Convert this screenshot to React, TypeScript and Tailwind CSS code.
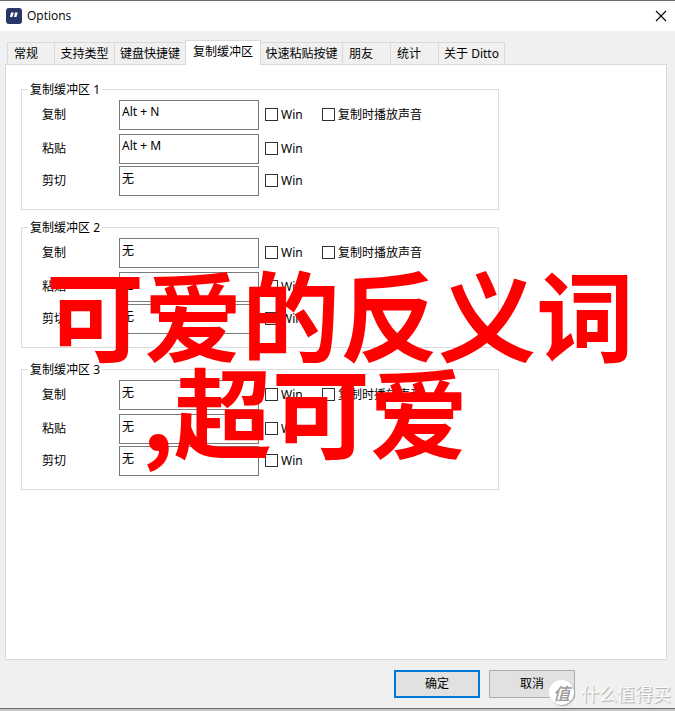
import { useState } from "react";

const tabs = [
  { name: "常规", width: "w-[48px]" },
  { name: "支持类型", width: "w-[60px]" },
  { name: "键盘快捷键", width: "w-[71px]" },
  { name: "复制缓冲区", width: "w-[76px]" },
  { name: "快速粘贴按键", width: "w-[82px]" },
  { name: "朋友", width: "w-[48px]" },
  { name: "统计", width: "w-[48px]" },
  { name: "关于 Ditto", width: "w-[66px]" },
];

const buffers = [
  { id: 1, gap: "mt-0", keys: ["Alt + N", "Alt + M", "无"] },
  { id: 2, gap: "mt-[9px]", keys: ["无", "无", "无"] },
  { id: 3, gap: "mt-[13px]", keys: ["无", "无", "无"] },
];

const actions = ["复制", "粘贴", "剪切"];
const rowGaps = ["mt-0", "mt-1", "mt-[2px]"];

function Check({ label }: { label: string }) {
  return (
    <label className="flex items-start gap-[3px] whitespace-nowrap">
      <input
        type="checkbox"
        className="mt-px size-[13px] shrink-0 appearance-none border border-[#333] bg-white checked:bg-[#0078d7]"
      />
      {label}
    </label>
  );
}

function Buffer({ id, gap, keys }: { id: number; gap: string; keys: string[] }) {
  return (
    <fieldset
      className={`w-[478px] max-w-full border border-[#dcdcdc] px-[6px] pt-[2px] pb-[13px] ${gap}`}
    >
      <legend className="h-[17px] px-[2px] leading-[17px]">复制缓冲区 {id}</legend>
      {actions.map((action, i) => (
        <div key={action} className={`flex h-[30px] items-center pl-[14px] ${rowGaps[i]}`}>
          <label htmlFor={`key-${id}-${i}`} className="w-[77px] shrink-0">
            {action}
          </label>
          <input
            id={`key-${id}-${i}`}
            type="text"
            defaultValue={keys[i]}
            className="mr-[6px] h-[30px] w-[140px] border border-[#7a7a7a] bg-white pr-[2px] pb-[7px] pl-[2px] outline-none"
          />
          <div className="w-[57px] shrink-0">
            <Check label="Win" />
          </div>
          {i === 0 && <Check label="复制时播放声音" />}
        </div>
      ))}
    </fieldset>
  );
}

export default function App() {
  const [active, setActive] = useState(3);
  return (
    <div className="relative flex min-h-screen flex-col overflow-hidden border-t border-[#6e6e6e] bg-[#f0f0f0] font-['Noto_Sans','Noto_Sans_CJK_SC',sans-serif] text-[12px] leading-[16px] text-black">
      <header className="flex h-[30px] items-center justify-between bg-white pr-2 pl-[6px]">
        <div className="flex items-center gap-[5px]">
          <svg viewBox="0 0 16 16" className="size-4" aria-hidden="true">
            <rect width="16" height="16" rx="3" fill="#2b3668" />
            <path d="M5 4.5h2.8L6.4 9H4zM9 4.5h2.8L10.4 9H8z" fill="#fff" />
          </svg>
          <h1 className="font-['Open_Sans',sans-serif]">Options</h1>
        </div>
        <button type="button" aria-label="关闭" className="size-3">
          <svg viewBox="0 0 12 12" className="size-3" aria-hidden="true">
            <path d="M1 1l10 10M11 1L1 11" stroke="#000" strokeWidth="1.1" fill="none" />
          </svg>
        </button>
      </header>

      <main className="flex flex-1 flex-col pt-[9px] pr-2 pl-[5px]">
        <div role="tablist" className="flex h-[24px] items-end pl-[2px]">
          {tabs.map((tab, i) => (
            <button
              key={tab.name}
              type="button"
              role="tab"
              aria-selected={i === active}
              onClick={() => setActive(i)}
              className={`shrink-0 border-t border-r border-[#d9d9d9] whitespace-nowrap ${tab.width} ${
                i === active
                  ? "z-10 -mb-px -ml-px h-[25px] border-l bg-white pb-[2px]"
                  : "h-[22px] bg-[#f0f0f0] first:border-l"
              } ${tab.name.length === 2 ? "pl-[6px] text-left" : "text-center"}`}
            >
              {tab.name}
            </button>
          ))}
        </div>
        <section className="flex-1 border border-[#d9d9d9] bg-white px-[15px] pt-4 pb-4">
          {buffers.map((b) => (
            <Buffer key={b.id} {...b} />
          ))}
        </section>
      </main>

      <footer className="flex justify-end gap-[9px] py-[10px] pr-[100px]">
        <button type="button" className="h-7 w-[86px] border-2 border-[#0078d7] bg-[#e1e1e1]">
          确定
        </button>
        <button type="button" className="h-7 w-[86px] border border-[#adadad] bg-[#e1e1e1]">
          取消
        </button>
      </footer>
      <div className="h-[3px] border-t border-[#6e6e6e] bg-[#c4c4c4]" />

      <div className="pointer-events-none absolute right-1 bottom-[6px] z-20 flex items-center gap-[7px] font-['Noto_Sans_CJK_SC',sans-serif] text-[#fafafa]">
        <span className="flex size-[25px] items-center justify-center rounded-full bg-white text-[17px] font-medium text-[#999] italic shadow-[1px_1px_1px_#aaa]">
          值
        </span>
        <span className="text-[18px] leading-[24px] [text-shadow:1px_1px_1px_#aaa]">什么值得买</span>
      </div>

      <div className="pointer-events-none absolute top-[262px] left-[46px] z-20 font-['Noto_Sans_CJK_SC',sans-serif] text-[98px] leading-[97px] font-bold whitespace-nowrap text-[#f00]">
        <p>可爱的反义词</p>
        <p className="pl-[96px]">,超可爱</p>
      </div>
    </div>
  );
}
